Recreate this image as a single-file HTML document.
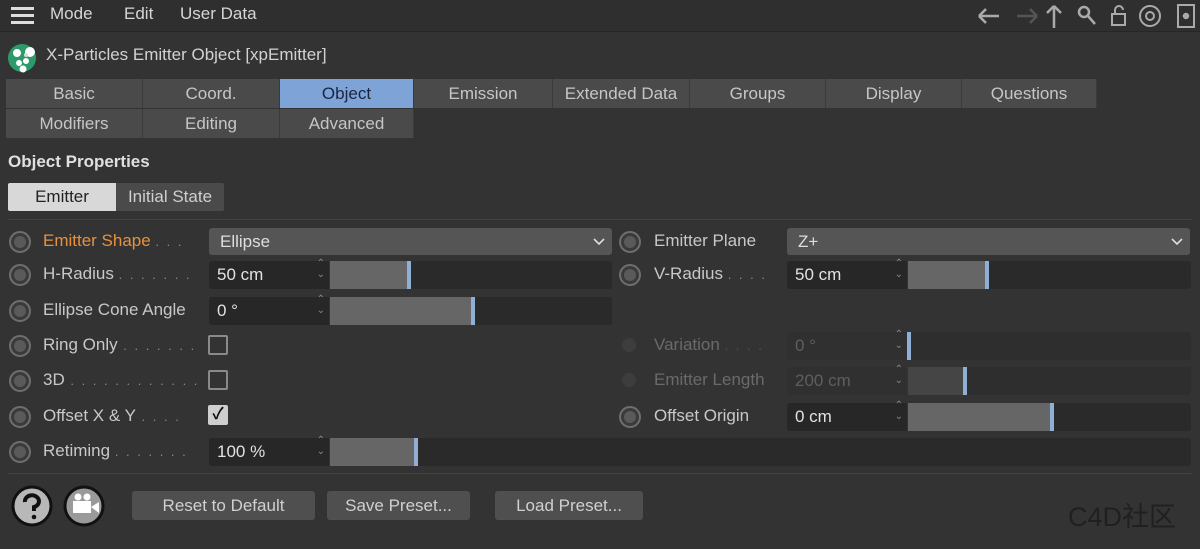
<!DOCTYPE html>
<html><head><meta charset="utf-8"><style>
*{box-sizing:border-box;margin:0;padding:0}
body{width:1200px;height:549px;background:#333334;font-family:"Liberation Sans","Noto Sans CJK SC",sans-serif;color:#cacaca;position:relative;overflow:hidden;font-size:17px}
.a{position:absolute}
.menu{top:0;left:0;width:1200px;height:32px;background:#2f2f30;border-bottom:1px solid #262626}
.tab{position:absolute;height:29px;background:#4a4a4b;border-right:1px solid #3a3a3a;text-align:center;line-height:29px;font-size:17px;color:#c6c6c6}
.lbl{position:absolute;font-size:17px;color:#c8c8c8;white-space:nowrap}
.dots{color:#8a8a8a;letter-spacing:2px;font-size:13px}
.rad{position:absolute;width:22px;height:22px;border-radius:50%;background:#5a5a5a;border:2px solid #6e6e6e;box-shadow:inset 0 0 0 3px #3a3a3a}
.dd{position:absolute;height:27px;background:#555556;border-radius:3px;padding-left:11px;line-height:27px;color:#dedede}
.dd svg{position:absolute;right:7px;top:10px}
.num{position:absolute;height:28px;background:#272727;border-radius:3px 0 0 3px;padding-left:8px;line-height:28px;color:#e2e2e2}
.num:after{content:"⌃\A⌄";white-space:pre;position:absolute;right:4px;top:-3px;font-size:10px;line-height:11px;color:#888}
.sl{position:absolute;height:28px;background:#2a2a2a;border-radius:0 3px 3px 0}
.fill{position:absolute;left:0;top:0;bottom:0;background:#666667}
.fill:after{content:"";position:absolute;right:0;top:0;bottom:0;width:4px;background:#8fb0d4}
.cb{position:absolute;width:20px;height:20px;border:2px solid #8a8a8a;border-radius:2px}
.btn{position:absolute;height:29px;background:#4f4f50;border-radius:3px;text-align:center;line-height:29px;color:#d0d0d0;top:491px}
</style></head><body>
<div class="a menu"></div>
<div class="a" style="left:11px;top:7px;width:23px;height:3px;background:#ddd;box-shadow:0 7px 0 #ddd,0 14px 0 #ddd"></div>
<div class="lbl" style="left:50px;top:4px;color:#d6d6d6">Mode</div>
<div class="lbl" style="left:124px;top:4px;color:#d6d6d6">Edit</div>
<div class="lbl" style="left:180px;top:4px;color:#d6d6d6">User Data</div>
<svg class="a" style="left:975px;top:2px" width="225" height="28" viewBox="0 0 225 28" fill="none" stroke="#aaa" stroke-width="2.5">
<path d="M4 14h20M4 14l7-7M4 14l7 7"/><path d="M42 14h20M62 14l-7-7M62 14l-7 7" stroke="#555"/>
<path d="M79 26V4M79 4l-7 7M79 4l7 7"/><circle cx="109" cy="10" r="5"/><path d="M113 14l7 8"/>
<rect x="137" y="12" width="13" height="11" stroke-width="2"/><path d="M140 12V8a4 4 0 0 1 8 0" stroke-width="2"/>
<circle cx="175" cy="14" r="10" stroke-width="2"/><circle cx="175" cy="14" r="4" stroke-width="2"/>
<rect x="203" y="3" width="16" height="22" stroke-width="2"/><circle cx="211" cy="14" r="2" fill="#aaa"/></svg>
<svg class="a" style="left:6px;top:41px" width="32" height="32"><circle cx="16" cy="17" r="14" fill="#2e9a6c"/><circle cx="11" cy="12" r="4" fill="#fff"/><circle cx="24" cy="11" r="5" fill="#fff"/><circle cx="13" cy="22" r="3" fill="#fff"/><circle cx="20" cy="20" r="3" fill="#fff"/><circle cx="17" cy="28" r="3.5" fill="#fff"/><circle cx="20" cy="14" r="2" fill="#ddd"/></svg>
<div class="lbl" style="left:46px;top:45px;color:#d2d2d2">X-Particles Emitter Object [xpEmitter]</div>
<div class="tab" style="left:6px;top:79px;width:137px">Basic</div>
<div class="tab" style="left:143px;top:79px;width:137px">Coord.</div>
<div class="tab" style="left:280px;top:79px;width:134px;background:#7ea3d6;color:#1a2540">Object</div>
<div class="tab" style="left:414px;top:79px;width:139px">Emission</div>
<div class="tab" style="left:553px;top:79px;width:137px">Extended Data</div>
<div class="tab" style="left:690px;top:79px;width:136px">Groups</div>
<div class="tab" style="left:826px;top:79px;width:136px">Display</div>
<div class="tab" style="left:962px;top:79px;width:135px">Questions</div>
<div class="tab" style="left:6px;top:109px;width:137px">Modifiers</div>
<div class="tab" style="left:143px;top:109px;width:137px">Editing</div>
<div class="tab" style="left:280px;top:109px;width:134px">Advanced</div>
<div class="lbl" style="left:8px;top:152px;font-weight:bold;color:#e0e0e0">Object Properties</div>
<div class="a" style="left:8px;top:183px;width:108px;height:28px;background:#d8d8d8;color:#222;text-align:center;line-height:28px;border-radius:2px 0 0 2px">Emitter</div>
<div class="a" style="left:116px;top:183px;width:108px;height:28px;background:#4a4a4b;color:#cfcfcf;text-align:center;line-height:28px;border-radius:0 2px 2px 0">Initial State</div>
<div class="a" style="left:8px;top:219px;width:1184px;height:1px;background:#414141"></div>

<div class="rad" style="left:9px;top:231px"></div><div class="lbl" style="left:43px;top:231px;color:#e8913c">Emitter Shape <span class="dots">. . .</span></div>
<div class="dd" style="left:209px;top:228px;width:403px">Ellipse<svg width="12" height="8"><path d="M1 1l5 5 5-5" fill="none" stroke="#ddd" stroke-width="1.6"/></svg></div>
<div class="rad" style="left:619px;top:231px"></div><div class="lbl" style="left:654px;top:231px">Emitter Plane</div>
<div class="dd" style="left:787px;top:228px;width:403px">Z+<svg width="12" height="8"><path d="M1 1l5 5 5-5" fill="none" stroke="#ddd" stroke-width="1.6"/></svg></div>

<div class="rad" style="left:9px;top:264px"></div><div class="lbl" style="left:43px;top:264px">H-Radius <span class="dots">. . . . . . .</span></div>
<div class="num" style="left:209px;top:261px;width:120px">50 cm</div><div class="sl" style="left:330px;top:261px;width:282px"><div class="fill" style="width:81px"></div></div>
<div class="rad" style="left:619px;top:264px"></div><div class="lbl" style="left:654px;top:264px">V-Radius <span class="dots">. . . .</span></div>
<div class="num" style="left:787px;top:261px;width:120px">50 cm</div><div class="sl" style="left:908px;top:261px;width:283px"><div class="fill" style="width:81px"></div></div>

<div class="rad" style="left:9px;top:300px"></div><div class="lbl" style="left:43px;top:300px">Ellipse Cone Angle</div>
<div class="num" style="left:209px;top:297px;width:120px">0 °</div><div class="sl" style="left:330px;top:297px;width:282px"><div class="fill" style="width:145px"></div></div>

<div class="rad" style="left:9px;top:335px"></div><div class="lbl" style="left:43px;top:335px">Ring Only<span class="dots"> . . . . . . .</span></div>
<div class="cb" style="left:208px;top:335px"></div>
<div class="rad" style="left:622px;top:338px;width:14px;height:14px;border:none;background:#3d3d3d;box-shadow:none"></div><div class="lbl" style="left:654px;top:335px;color:#6a6a6a">Variation <span class="dots" style="color:#555">. . . .</span></div>
<div class="num" style="left:787px;top:332px;width:120px;background:#303030;color:#5e5e5e">0 °</div><div class="sl" style="left:908px;top:332px;width:283px;background:#2e2e2e"><div class="fill" style="width:3px;background:#3a3a3a"></div></div>

<div class="rad" style="left:9px;top:370px"></div><div class="lbl" style="left:43px;top:370px">3D<span class="dots"> . . . . . . . . . . . .</span></div>
<div class="cb" style="left:208px;top:370px"></div>
<div class="rad" style="left:622px;top:373px;width:14px;height:14px;border:none;background:#3d3d3d;box-shadow:none"></div><div class="lbl" style="left:654px;top:370px;color:#6a6a6a">Emitter Length</div>
<div class="num" style="left:787px;top:367px;width:120px;background:#303030;color:#5e5e5e">200 cm</div><div class="sl" style="left:908px;top:367px;width:283px;background:#2e2e2e"><div class="fill" style="width:59px;background:#454545"></div></div>

<div class="rad" style="left:9px;top:406px"></div><div class="lbl" style="left:43px;top:406px">Offset X &amp; Y<span class="dots"> . . . .</span></div>
<div class="cb" style="left:208px;top:405px;background:#cfcfcf;border-color:#cfcfcf;color:#111;font-size:16px;line-height:16px;text-align:center;font-weight:bold">✓</div>
<div class="rad" style="left:619px;top:406px"></div><div class="lbl" style="left:654px;top:406px">Offset Origin</div>
<div class="num" style="left:787px;top:403px;width:120px">0 cm</div><div class="sl" style="left:908px;top:403px;width:283px"><div class="fill" style="width:146px"></div></div>

<div class="rad" style="left:9px;top:441px"></div><div class="lbl" style="left:43px;top:441px">Retiming <span class="dots">. . . . . . .</span></div>
<div class="num" style="left:209px;top:438px;width:120px">100 %</div><div class="sl" style="left:330px;top:438px;width:861px"><div class="fill" style="width:88px"></div></div>
<div class="a" style="left:8px;top:473px;width:1184px;height:1px;background:#414141"></div>

<svg class="a" style="left:10px;top:485px" width="100" height="42"><circle cx="22" cy="21" r="19" fill="#b8b8b8" stroke="#111" stroke-width="3"/><path d="M15 17a7 6 0 1 1 9 5v4" fill="none" stroke="#111" stroke-width="4"/><circle cx="24" cy="32" r="2.3" fill="#111"/>
<circle cx="74" cy="21" r="19" fill="#9a9a9a" stroke="#111" stroke-width="3"/><circle cx="68" cy="12" r="3.5" fill="#fff"/><circle cx="77" cy="12" r="3.5" fill="#fff"/><rect x="63" y="16" width="18" height="12" fill="#fff"/><path d="M81 22l8-5v11z" fill="#fff"/></svg>
<div class="btn" style="left:132px;width:183px">Reset to Default</div>
<div class="btn" style="left:327px;width:143px">Save Preset...</div>
<div class="btn" style="left:495px;width:148px">Load Preset...</div>
<div class="lbl" style="left:1068px;top:495px;font-size:27px;color:#202020">C4D社区</div>
</body></html>
